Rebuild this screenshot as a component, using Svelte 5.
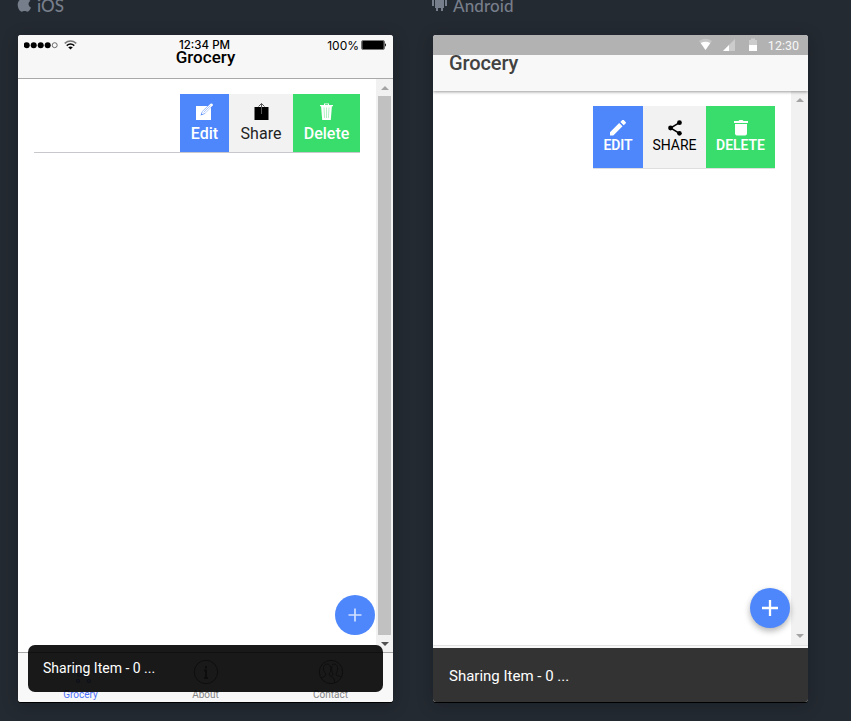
<script>
  const iosActions = [
    { id: 'edit', label: 'Edit', width: 49 },
    { id: 'share', label: 'Share', width: 64 },
    { id: 'delete', label: 'Delete', width: 67 }
  ];
  const mdActions = [
    { id: 'edit', label: 'EDIT', width: 50 },
    { id: 'share', label: 'SHARE', width: 63 },
    { id: 'delete', label: 'DELETE', width: 69 }
  ];
  const tabs = ['Grocery', 'About', 'Contact'];
  const message = 'Sharing Item - 0 ...';
</script>

<main>
  <section class="platform">
    <h2>
      <svg width="15" height="18" viewBox="0 0 15 18" fill="#777e8b"><path d="M10 0c.1 2-1.300 3.600-3 3.700C6.900 2 8.300.3 10 0zM7.300 5.100C8 5 8.800 4.200 10.300 4.200c1.300 0 2.400.7 3.100 1.700-2.800 1.600-2.300 5.400.6 6.600-.7 2-2 4.200-3.600 4.200-1.100 0-1.500-.7-2.800-.7s-1.800.7-2.800.7C2.900 16.700.7 13.300.7 9.800c0-3.400 1.900-5.500 4-5.500 1.100 0 2 .8 2.600.8z"/></svg>
      <span>iOS</span>
    </h2>
    <div class="phone ios">
      <header>
        <div class="status">
          <div class="signal">
            <svg width="56" height="12" viewBox="0 0 56 12"><circle cx="2.700" cy="6.200" r="3"/><circle cx="9.700" cy="6.200" r="3"/><circle cx="16.700" cy="6.200" r="3"/><circle cx="23.700" cy="6.200" r="3"/><circle cx="30.700" cy="6.200" r="2.500" fill="none" stroke="#333" stroke-width=".7"/><g fill="none" stroke="#000" stroke-width="1.500"><path d="M40.700 4.300q5.800-4.600 11.600 0" stroke="#777"/><path d="M42.700 6.600q3.800-3 7.600 0"/></g><path d="m44.200 8.300 2.300 2.300 2.300-2.300q-2.300-1.600-4.600 0z"/></svg>
          </div>
          <time>12:34 PM</time>
          <div class="power"><span>100%</span>
            <svg width="26" height="12" viewBox="0 0 26 12"><rect x=".5" y="1.500" width="23" height="9" rx="1.500" fill="#777" stroke="#777"/><rect x="1.500" y="2" width="21" height="8" rx=".7"/><path d="M24 4.300q2 1.700 0 3.500z"/></svg>
          </div>
        </div>
        <h1>Grocery</h1>
      </header>
      <div class="content">
        <div class="list">
          <div class="item">
            {#each iosActions as action}
              <button class={action.id} style="width: {action.width}px">
                {#if action.id === 'edit'}
                  <svg width="19" height="18" viewBox="0 0 19 18"><path fill="#fff" d="M1 3h11.500L7 8.500 5.500 12.500 9.500 11 16 4.500V17H1z"/><path fill="#fff" d="m6.700 11.300 1-3L15.500.7l1.500-.2.900.9-.2 1.200L10 10.200z"/><path d="m8.700 9.300 6.800-6.800" stroke="#4e87fb" stroke-width=".5"/></svg>
                {:else if action.id === 'share'}
                  <svg width="15" height="18" viewBox="0 0 15 18"><path fill="#000" d="M.5 4H7v7h1V4h6.500v13H.5z"/><path d="M7.500 11V.7M4.500 3.500l3-3 3 3" stroke="#444" stroke-width=".9" fill="none"/></svg>
                {:else}
                  <svg width="15" height="18" viewBox="0 0 15 18"><path fill="#fff" d="M5 .5h5V2h4v1.200h-1.100L11.800 17H3.200L2.100 3.200H1V2h4zm1 .8V2h3v-.7z"/><path d="m5 4.500.6 10.500M7.500 4.500V15M10 4.500 9.400 15" stroke="#93e9ae" stroke-width=".7"/></svg>
                {/if}
                <span>{action.label}</span>
              </button>
            {/each}
          </div>
        </div>
        <div class="scroll"><i class="up"></i><b></b><i class="down"></i></div>
      </div>
      <button class="fab" aria-label="Add"><svg width="14" height="14" viewBox="0 0 14 14"><path d="M7 .5v13M.5 7h13" stroke="#d2e0ff" stroke-width="1.700"/></svg></button>
      <nav>
        {#each tabs as tab, i}
          <div class:active={i === 0}>
            {#if i === 0}
              <svg class="cart" width="26" height="26" viewBox="0 0 26 26" fill="none" stroke="currentColor" stroke-width="1.200"><path d="M2 3h5l3 14h11M8 7h14l-2 7H9.500"/><circle cx="10" cy="22" r="1.500"/><circle cx="21" cy="22" r="1.500"/></svg>
            {:else if i === 1}
              <svg width="26" height="26" viewBox="0 0 26 26" fill="none" stroke="currentColor"><circle cx="13" cy="13" r="11.700"/><path d="M13 7v2.500M11 11.500h2V19m-2 0h4" stroke-width="2"/></svg>
            {:else}
              <svg width="26" height="26" viewBox="0 0 26 26" fill="none" stroke="currentColor"><circle cx="13" cy="13" r="11.700"/><path d="M3 19c3-2 5-1 5-4-4-4-3-10 1-10s5 6 2 10c0 3 4 2 5 5l1 4M14 6c4-3 8 2 4 9 0 3 3 1 5 3M14 7c-1 3 0 6 1 8l-1 2"/></svg>
            {/if}
            <span>{tab}</span>
          </div>
        {/each}
      </nav>
      <div class="toast">{message}</div>
    </div>
  </section>

  <section class="platform">
    <h2>
      <svg width="15" height="18" viewBox="0 0 15 18" fill="#777e8b"><path d="M0 5h2v6H0zm3 0h9v8h-1v3H9v-3H6v3H4v-3H3zm10 0h2v6h-2zM3 4q4.500-6 9 0z"/></svg>
      <span class="android-label">Android</span>
    </h2>
    <div class="phone md">
      <div class="status">
        <svg width="60" height="14" viewBox="0 0 60 14"><path fill="#c6c6c6" d="M0 3q6.500-4.600 13 0L6.500 12z"/><path fill="#fff" d="M1.700 5.100q4.800-2.800 9.600 0L6.500 12z"/><path fill="#ccc" d="M36 1v12H24z"/><path fill="#fff" d="M30 7v6h-6z"/><path fill="#ccc" d="M50 2h2V.5h4V2h2v5h-8z"/><path fill="#fff" d="M50 7h8v6h-8z"/></svg>
        <time>12:30</time>
      </div>
      <header><h1>Grocery</h1></header>
      <div class="content">
        <div class="list">
          <div class="item">
            {#each mdActions as action}
              <button class={action.id} style="width: {action.width}px">
                {#if action.id === 'edit'}
                  <svg width="16" height="16" viewBox="0 0 16 16" fill="#fff"><path d="M0 12.200V15.500h3.300l9.200-9.200L9.200 3zM15.600 3.400q.7-.7 0-1.400L13.700.1q-.7-.7-1.400 0l-1.900 1.900 3.300 3.300z"/></svg>
                {:else if action.id === 'share'}
                  <svg width="16" height="18" viewBox="0 0 16 18"><path d="M13 3 3 9l10 6" fill="none" stroke="#000" stroke-width="1.700"/><circle cx="13" cy="3" r="2.700"/><circle cx="3" cy="9" r="2.700"/><circle cx="13" cy="15" r="2.600"/></svg>
                {:else}
                  <svg width="14" height="16" viewBox="0 0 14 16" fill="#fff"><path d="M1 4h12v9.500q0 2-2 2H3q-2 0-2-2zM4.500 1l1-1h3l1 1H14v2H0V1z"/></svg>
                {/if}
                <span>{action.label}</span>
              </button>
            {/each}
          </div>
        </div>
        <div class="scroll"><i class="up"></i><i class="down"></i></div>
      </div>
      <div class="tab-edge"></div>
      <button class="fab" aria-label="Add"><svg width="16" height="16" viewBox="0 0 16 16"><path d="M8 0v16M0 8h16" stroke="#fff" stroke-width="2.300"/></svg></button>
      <div class="toast">{message}</div>
    </div>
  </section>
</main>

<style>
  :global(body) { background: #242a31; overflow: hidden; }
  * { box-sizing: border-box; }
  main { height: 721px; display: flex; gap: 40px; padding-left: 18px; overflow: hidden; font-family: Roboto, sans-serif; background: #242a31; }
  .platform { width: 375px; }
  h2 { height: 35px; margin: 0; display: flex; align-items: flex-start; gap: 5px; color: #777e8b; font: 500 17px/12px Lato, sans-serif; }
  h2 svg { margin: -5px 0 0 -1px; }
  h2 span { letter-spacing: .1px; }
  .android-label { margin-left: 1px; }
  .phone { position: relative; display: flex; flex-direction: column; height: 667px; background: #fff; border-radius: 3px; box-shadow: 0 1px 0 #000, 0 3px 16px rgba(10, 12, 24, .3); overflow: visible; }
  h1 { margin: 0; font-weight: 500; }
  button { border: 0; padding: 0; margin: 0; font-family: inherit; }
  svg { display: block; flex-shrink: 0; }

  .ios header { height: 44px; border-bottom: 1px solid #a9a9a9; background: #f7f7f7; border-radius: 3px 3px 0 0; }
  .ios .status { display: grid; grid-template-columns: 1fr 60px 1fr; height: 18px; padding: 4px 6px 0 6px; font: 12px/13px Inter, sans-serif; }
  .ios .status time { font-weight: 500; font-size: 11.5px; white-space: nowrap; display: flex; justify-content: center; margin-left: -2px; }
  .power { display: flex; justify-content: flex-end; gap: 2px; }
  .ios h1 { font-size: 17px; line-height: 20px; text-align: center; margin-top: -6px; color: #000; }
  .content { display: flex; }
  .ios .content { height: 573px; }
  .list { flex: 1; padding: 15px 16px; }
  .item { display: flex; justify-content: flex-end; }
  .ios .item { height: 59px; border-bottom: 1px solid #c8c7cc; }
  .item button { display: flex; flex-direction: column; align-items: center; }
  .ios .item button { font-size: 16px; line-height: 20px; padding-top: 9px; height: 58px; }
  .ios .item span { margin-top: 3px; }
  .edit { background: #4e87fb; color: #fff; }
  .share { background: #f2f2f2; color: #000; }
  .delete { background: #38dd6c; color: #fff; }
  .ios .edit, .ios .delete { font-weight: 500; }
  .ios .share { color: #222; }
  .scroll { width: 17px; background: #f1f1f1; display: flex; flex-direction: column; align-items: center; padding: 7px 0 5px; }
  .scroll i { width: 0; height: 0; border: 4px solid transparent; }
  .scroll .up { border-top: 0; border-bottom-color: #a3a3a3; }
  .scroll .down { border-bottom: 0; border-top-color: #a3a3a3; margin-top: auto; }
  .scroll b { width: 13px; height: 539px; margin-top: 6px; background: #c1c1c1; flex-shrink: 0; }
  .ios .scroll { padding-bottom: 6px; }
  .md .scroll { padding-bottom: 7px; }
  .ios .scroll .down { border-top-color: #505050; }
  .fab { position: absolute; width: 40px; height: 40px; border-radius: 50%; background: #4e87fb; display: flex; align-items: center; justify-content: center; }
  .ios .fab { right: 18px; top: 560px; }
  nav { display: flex; height: 50px; background: #f8f8f8; border-top: 1px solid #a7a7a7; border-radius: 0 0 3px 3px; }
  nav div { flex: 1; display: flex; flex-direction: column; align-items: center; padding-top: 6px; color: #858585; font-size: 10px; line-height: 12px; }
  nav span { margin-top: 4px; }
  nav .active { color: #4e70fa; }
  nav .cart { opacity: .7; }
  .toast { position: absolute; color: #fff; display: flex; align-items: center; font-size: 14px; }
  .ios .toast { left: 10px; right: 10px; bottom: 10px; height: 47px; border-radius: 7px; background: rgba(0, 0, 0, .9); padding: 0 0 1px 15px; }

  .md .status { display: flex; justify-content: flex-end; align-items: center; gap: 9px; height: 20px; padding-right: 9px; background: #b2b2b2; border-radius: 3px 3px 0 0; color: #f7f7f7; font-size: 12.500px; }
  .md header { position: relative; z-index: 1; height: 36px; padding-left: 16px; background: #f8f8f8; box-shadow: 0 1px 3px rgba(0, 0, 0, .4); clip-path: inset(0 0 -6px 0); }
  .md h1 { font-size: 20px; line-height: 24px; margin-top: -4px; color: #424242; letter-spacing: -.1px; }
  .md .content { height: 554px; }
  .tab-edge { height: 3px; background: #f8f8f8; border-top: 1px solid #e2e2e2; }
  .md .item { height: 63px; }
  .md .item button { height: 63px; padding-top: 14px; border-bottom: 1px solid #dedede; font-size: 14px; line-height: 16px; font-weight: 500; }
  .md .item svg { height: 16px; }
  .md .item span { margin-top: 1px; }
  .md .item .edit, .md .item .delete { font-weight: 600; letter-spacing: -.05px; }
  .md .item .share { font-weight: 400; }
  .md .fab { right: 18px; top: 553px; box-shadow: 0 3px 6px rgba(0, 0, 0, .3); }
  .md .toast { left: 0; right: 0; bottom: 0; height: 54px; padding: 2px 0 0 16px; background: #333; border-radius: 0 0 3px 3px; font-size: 15px; }
</style>
